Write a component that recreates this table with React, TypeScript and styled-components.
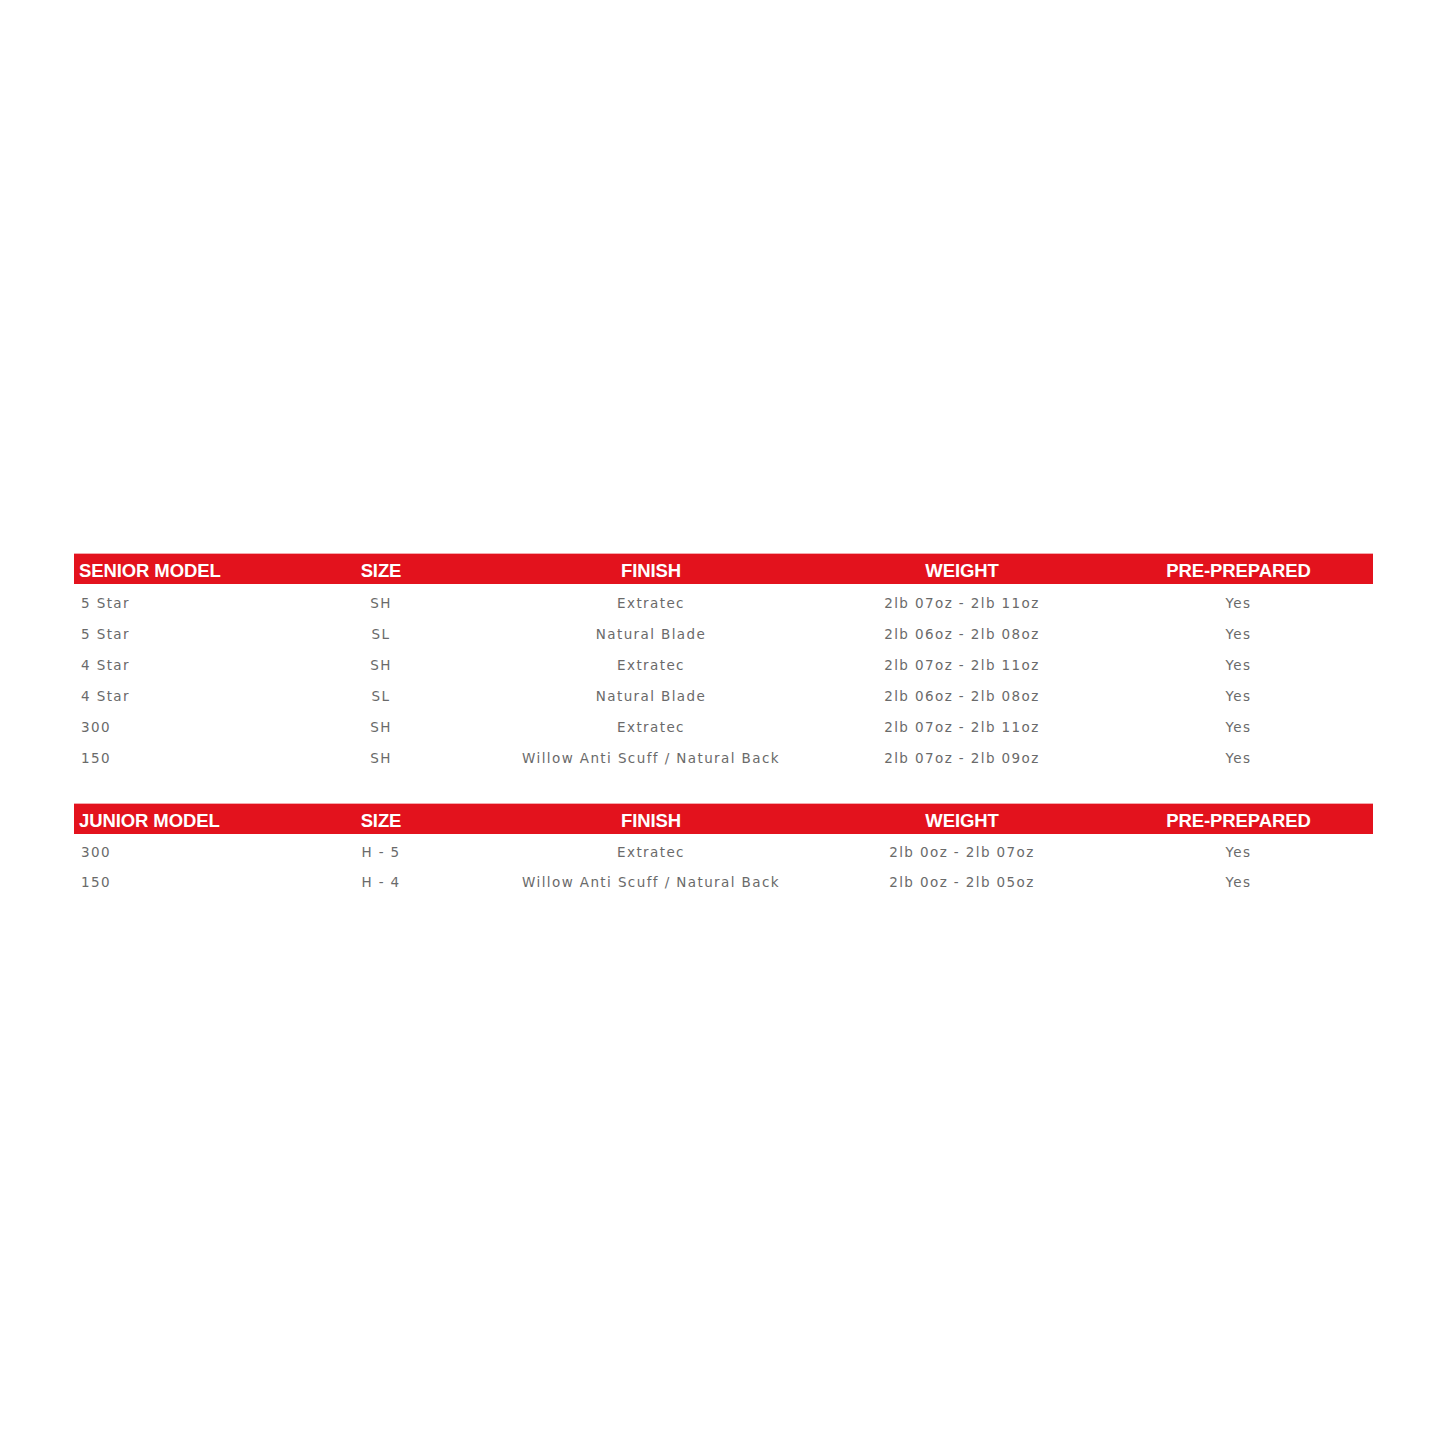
import styled, { createGlobalStyle } from "styled-components";

const GlobalStyle = createGlobalStyle`
  html, body {
    margin: 0;
    padding: 0;
    background: #ffffff;
  }
`;

const Page = styled.div`
  width: 1445px;
  height: 1445px;
  display: flex;
  flex-direction: column;
  padding: 554px 72px 0 74px;
  box-sizing: border-box;
  gap: 31px;
`;

const Section = styled.div`
  display: flex;
  flex-direction: column;
`;

const columns = "256px 102px 438px 184px 1fr";

const HeaderBar = styled.div`
  display: grid;
  grid-template-columns: ${columns};
  height: 30px;
  padding-top: 4px;
  box-sizing: border-box;
  align-items: center;
  background: #e3121d;
  box-shadow: 0 -1px 0 #f4a9ad;
  color: #ffffff;
  font-family: "Liberation Sans", Arial, sans-serif;
  font-weight: 700;
  font-size: 18.5px;
  letter-spacing: -0.1px;
`;

const HeadCell = styled.div<{ $left?: boolean; $shift?: number }>`
  text-align: ${(p) => (p.$left ? "left" : "center")};
  padding-left: ${(p) => (p.$left ? 5 : p.$shift ?? 0)}px;
  white-space: nowrap;
`;

const Body = styled.div`
  display: flex;
  flex-direction: column;
  padding-top: 3px;
`;

const Row = styled.div<{ $h: number }>`
  display: grid;
  grid-template-columns: ${columns};
  height: ${(p) => p.$h}px;
  align-items: center;
  color: #6a6a6a;
  font-family: "DejaVu Sans", Verdana, sans-serif;
  font-size: 13.5px;
  letter-spacing: 1.4px;
`;

const Cell = styled.div<{ $left?: boolean; $shift?: number }>`
  text-align: ${(p) => (p.$left ? "left" : "center")};
  padding-left: ${(p) => (p.$left ? 7 : p.$shift ?? 0)}px;
  white-space: nowrap;
`;

type Bat = [string, string, string, string, string];

const senior: Bat[] = [
  ["5 Star", "SH", "Extratec", "2lb 07oz - 2lb 11oz", "Yes"],
  ["5 Star", "SL", "Natural Blade", "2lb 06oz - 2lb 08oz", "Yes"],
  ["4 Star", "SH", "Extratec", "2lb 07oz - 2lb 11oz", "Yes"],
  ["4 Star", "SL", "Natural Blade", "2lb 06oz - 2lb 08oz", "Yes"],
  ["300", "SH", "Extratec", "2lb 07oz - 2lb 11oz", "Yes"],
  ["150", "SH", "Willow Anti Scuff / Natural Back", "2lb 07oz - 2lb 09oz", "Yes"],
];

const junior: Bat[] = [
  ["300", "H - 5", "Extratec", "2lb 0oz - 2lb 07oz", "Yes"],
  ["150", "H - 4", "Willow Anti Scuff / Natural Back", "2lb 0oz - 2lb 05oz", "Yes"],
];

const SpecTable = ({ title, rows, rowHeight }: { title: string; rows: Bat[]; rowHeight: number }) => (
  <Section>
    <HeaderBar>
      <HeadCell $left>{title}</HeadCell>
      <HeadCell>SIZE</HeadCell>
      <HeadCell>FINISH</HeadCell>
      <HeadCell>WEIGHT</HeadCell>
      <HeadCell $shift={50}>PRE-PREPARED</HeadCell>
    </HeaderBar>
    <Body>
      {rows.map((r, i) => (
        <Row key={i} $h={rowHeight}>
          <Cell $left>{r[0]}</Cell>
          <Cell>{r[1]}</Cell>
          <Cell>{r[2]}</Cell>
          <Cell>{r[3]}</Cell>
          <Cell $shift={50}>{r[4]}</Cell>
        </Row>
      ))}
    </Body>
  </Section>
);

const App = () => (
  <>
    <GlobalStyle />
    <Page>
      <SpecTable title="SENIOR MODEL" rows={senior} rowHeight={31} />
      <SpecTable title="JUNIOR MODEL" rows={junior} rowHeight={30} />
    </Page>
  </>
);

export default App;
